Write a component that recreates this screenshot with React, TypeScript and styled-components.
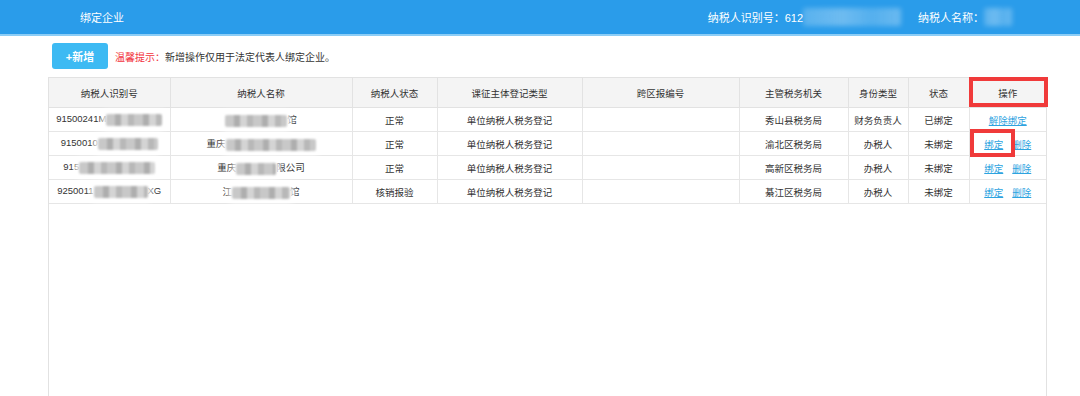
import React from 'react';
import styled, { createGlobalStyle } from 'styled-components';

const GlobalStyle = createGlobalStyle`
    html, body {
        margin: 0;
        padding: 0;
        background: #fff;
        overflow: hidden;
    }
    body {
        font-family: 'Liberation Sans', 'Noto Sans CJK SC', sans-serif;
        color: #333;
    }
`;

const Page = styled.div`
    width: 1080px;
    height: 396px;
    overflow: hidden;
`;

const TopBar = styled.header`
    display: flex;
    align-items: center;
    height: 34px;
    padding: 0 68px 0 80px;
    background: #2a9cea;
    border-bottom: 2px solid #8ccdf6;
    color: #fff;
    font-size: 11px;
`;

const TopTitle = styled.span`
    flex: 1;
`;

const TopField = styled.span`
    display: flex;
    align-items: center;
    margin-left: 17px;
`;

// mosaic that hides private numbers / names
const Mosaic = styled.span<{ $w: number; $light?: boolean }>`
    display: inline-block;
    width: ${p => p.$w}px;
    height: ${p => (p.$light ? 18 : 12)}px;
    vertical-align: middle;
    filter: blur(${p => (p.$light ? 2.5 : 1.2)}px);
    background: ${p =>
        p.$light
            ? 'linear-gradient(90deg, rgba(255,255,255,0.22), rgba(255,255,255,0.32) 40%, rgba(255,255,255,0.2) 70%, rgba(255,255,255,0.3))'
            : 'repeating-linear-gradient(90deg, #c8c8c8 0 9px, #aeaeae 9px 15px, #d4d4d4 15px 22px, #b8b8b8 22px 28px)'};
    box-shadow: ${p => (p.$light ? 'none' : '0 0 5px 4px rgba(255,255,255,0.85)')};
    border-radius: 2px;
`;

const Toolbar = styled.div`
    display: flex;
    align-items: center;
    gap: 7px;
    padding: 7px 0 0 52px;
    height: 26px;
`;

const AddButton = styled.button`
    width: 56px;
    height: 26px;
    border: none;
    border-radius: 3px;
    background: #3dbaf3;
    color: #fff;
    font-family: inherit;
    font-size: 11px;
    font-weight: bold;
    padding: 0;
`;

const Tip = styled.span`
    font-size: 10px;
    color: #333;
`;

const TipLabel = styled.span`
    color: #f2333d;
`;

const TableBox = styled.div`
    margin: 8px 0 0 48px;
    width: 997px;
    height: 340px;
    border: 1px solid #e2e2e2;
    border-bottom: none;
`;

const Table = styled.table`
    width: 100%;
    border-collapse: collapse;
    table-layout: fixed;
    font-size: 9.5px;
    color: #333;
`;

const Th = styled.th`
    position: relative;
    height: 29px;
    padding: 0;
    font-weight: normal;
    background: #f4f4f4;
    border-right: 1px solid #e2e2e2;
    border-bottom: 1px solid #e2e2e2;
    &:last-child {
        border-right: none;
    }
`;

const Td = styled.td`
    position: relative;
    height: 23px;
    padding: 0;
    text-align: center;
    white-space: nowrap;
    border-right: 1px solid #e6e6e6;
    border-bottom: 1px solid #e6e6e6;
    &:last-child {
        border-right: none;
    }
`;

const LinkText = styled.a<{ $gap?: boolean }>`
    color: #2ea3df;
    text-decoration: underline;
    cursor: pointer;
    margin-left: ${p => (p.$gap ? 9 : 0)}px;
`;

// red annotation frames drawn over the screenshot
const Mark = styled.span<{ $l: number; $t: number; $w: number; $h: number }>`
    position: absolute;
    left: ${p => p.$l}px;
    top: ${p => p.$t}px;
    width: ${p => p.$w}px;
    height: ${p => p.$h}px;
    border: 4px solid #f03a3a;
    box-sizing: border-box;
    pointer-events: none;
`;

const columns = [121, 182, 85, 145, 157, 109, 60, 61, 77];
const headers = ['纳税人识别号', '纳税人名称', '纳税人状态', '课征主体登记类型', '跨区报编号', '主管税务机关', '身份类型', '状态', '操作'];

type Row = {
    id: React.ReactNode;
    name: React.ReactNode;
    status: string;
    office: string;
    role: string;
    bound: boolean;
};

const rows: Row[] = [
    { id: <>91500241M<Mosaic $w={56} /></>, name: <><Mosaic $w={62} />馆</>, status: '正常', office: '秀山县税务局', role: '财务负责人', bound: true },
    { id: <>9150010<Mosaic $w={60} /></>, name: <>重庆<Mosaic $w={90} /></>, status: '正常', office: '渝北区税务局', role: '办税人', bound: false },
    { id: <>915<Mosaic $w={76} /></>, name: <>重庆<Mosaic $w={40} />限公司</>, status: '正常', office: '高新区税务局', role: '办税人', bound: false },
    { id: <>9250011<Mosaic $w={54} />XG</>, name: <>江<Mosaic $w={58} />馆</>, status: '核销报验', office: '綦江区税务局', role: '办税人', bound: false },
];

export default function App() {
    return (
        <Page>
            <GlobalStyle />
            <TopBar>
                <TopTitle>绑定企业</TopTitle>
                <TopField>
                    纳税人识别号：612<Mosaic $light $w={98} />
                </TopField>
                <TopField>
                    纳税人名称：<Mosaic $light $w={28} />
                </TopField>
            </TopBar>
            <Toolbar>
                <AddButton>+新增</AddButton>
                <Tip>
                    <TipLabel>温馨提示：</TipLabel>新增操作仅用于法定代表人绑定企业。
                </Tip>
            </Toolbar>
            <TableBox>
                <Table>
                    <colgroup>
                        {columns.map((w, i) => (
                            <col key={i} style={{ width: w }} />
                        ))}
                    </colgroup>
                    <thead>
                        <tr>
                            {headers.map((h, i) => (
                                <Th key={h}>
                                    {h}
                                    {i === headers.length - 1 && <Mark $l={-1} $t={-1} $w={79} $h={30} />}
                                </Th>
                            ))}
                        </tr>
                    </thead>
                    <tbody>
                        {rows.map((r, i) => (
                            <tr key={i}>
                                <Td>{r.id}</Td>
                                <Td>{r.name}</Td>
                                <Td>{r.status}</Td>
                                <Td>单位纳税人税务登记</Td>
                                <Td />
                                <Td>{r.office}</Td>
                                <Td>{r.role}</Td>
                                <Td>{r.bound ? '已绑定' : '未绑定'}</Td>
                                <Td>
                                    {r.bound ? (
                                        <LinkText>解除绑定</LinkText>
                                    ) : (
                                        <>
                                            <LinkText>绑定</LinkText>
                                            <LinkText $gap>删除</LinkText>
                                        </>
                                    )}
                                    {i === 1 && <Mark $l={0} $t={-3} $w={45} $h={28} />}
                                </Td>
                            </tr>
                        ))}
                    </tbody>
                </Table>
            </TableBox>
        </Page>
    );
}
